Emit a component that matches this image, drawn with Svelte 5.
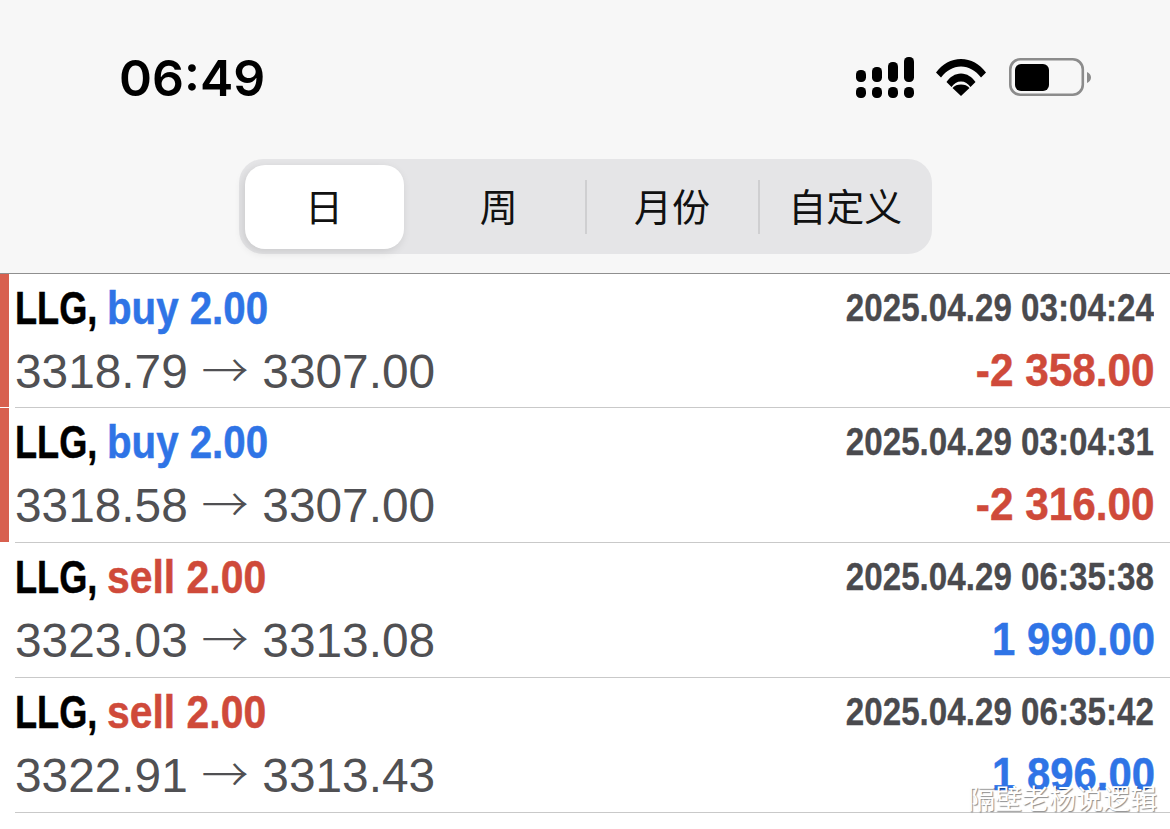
<script lang="ts">
	const TABS = ['日', '周', '月份', '自定义'];

	const TRADES = [
		{ side: 'buy', lots: '2.00', from: '3318.79', to: '3307.00', time: '2025.04.29 03:04:24', profit: '-2 358.00', loss: true },
		{ side: 'buy', lots: '2.00', from: '3318.58', to: '3307.00', time: '2025.04.29 03:04:31', profit: '-2 316.00', loss: true },
		{ side: 'sell', lots: '2.00', from: '3323.03', to: '3313.08', time: '2025.04.29 06:35:38', profit: '1 990.00', loss: false },
		{ side: 'sell', lots: '2.00', from: '3322.91', to: '3313.43', time: '2025.04.29 06:35:42', profit: '1 896.00', loss: false },
	];
</script>

<div class="screen">
	<header class="top">
		<div class="status">
			<span class="clock">06:49</span>
			<div class="status-icons">
				<svg class="signal" width="58" height="41" viewBox="0 0 58 41" fill="#000">
					<rect x="0" y="13" width="10" height="12" rx="4.500" />
					<rect x="16" y="10" width="10" height="15" rx="4.500" />
					<rect x="32" y="5" width="10" height="20" rx="4.500" />
					<rect x="48" y="0" width="10" height="25" rx="4.500" />
					<rect x="0" y="30" width="10" height="11" rx="4.500" />
					<rect x="16" y="30" width="10" height="11" rx="4.500" />
					<rect x="32" y="30" width="10" height="11" rx="4.500" />
					<rect x="48" y="30" width="10" height="11" rx="4.500" />
				</svg>
				<svg class="wifi" width="50" height="37" viewBox="0 0 50 37" fill="#000">
					<path d="M0 13.500C6.500 5 15 0 25 0s18.500 5 25 13.500l-5 5C39.500 11.500 33 7.500 25 7.500S10.500 11.500 5 18.500z" />
					<path d="M10.500 23C14 18 19 14.500 25 14.500S36 18 39.500 23l-5 5C32 24.500 29 22.500 25 22.500S18 24.500 15.500 28z" />
					<path d="M25 37l-8.500-8C18.500 26.500 21.500 25.500 25 25.500s6.500 1 8.500 3.500z" />
				</svg>
				<svg class="battery" width="82" height="38" viewBox="0 0 82 38">
					<rect x="1.300" y="1.300" width="72.500" height="35.400" rx="10" fill="none" stroke="#8c8c8c" stroke-width="2.600" />
					<rect x="6" y="6" width="34" height="27" rx="6" fill="#000" />
					<path d="M78 14c2.500 1 4 3 4 5.500S80.500 24 78 25z" fill="#8c8c8c" />
				</svg>
			</div>
		</div>
		<nav class="segments">
			{#each TABS as tab, i (tab)}
				<div class="segment" class:active={i === 0} class:divided={i > 1}>
					{#if i === 0}
						<span class="pill"></span>
					{/if}
					<span class="segment-label">{tab}</span>
				</div>
			{/each}
		</nav>
	</header>

	<ul class="trades">
		{#each TRADES as t (t.time)}
			<li class="trade">
				<span class="mark" class:on={t.loss}></span>
				<div class="trade-body">
					<div class="line">
						<span class="headline">
							<span class="symbol">LLG,</span>
							<span class="order" class:sell={t.side === 'sell'}>{t.side} {t.lots}</span>
						</span>
						<span class="time">{t.time}</span>
					</div>
					<div class="line">
						<span class="prices">{t.from} <span class="arrow">→</span> {t.to}</span>
						<span class="profit" class:loss={t.loss}>{t.profit}</span>
					</div>
				</div>
			</li>
		{/each}
	</ul>

	<span class="watermark">隔壁老杨说逻辑</span>
</div>

<style>
	:global(body) {
		background: #fff;
	}

	.screen {
		position: relative;
		height: 829px;
		overflow: hidden;
		font-family: 'Liberation Sans', Arial, sans-serif;
	}

	.top {
		height: 273px;
		background: #f7f7f7;
	}

	.status {
		display: flex;
		align-items: flex-start;
		justify-content: space-between;
		height: 159px;
		box-sizing: border-box;
		padding: 48px 79px 0 119px;
	}
	.clock {
		font-family: Inter, 'Liberation Sans', sans-serif;
		font-size: 50px;
		font-weight: 600;
		line-height: 60px;
		color: #000;
	}
	.status-icons {
		display: flex;
		align-items: flex-start;
		padding-top: 9px;
	}
	.wifi {
		margin: 2px 23px 0 22px;
	}
	.battery {
		margin-top: 1px;
	}

	.segments {
		display: grid;
		grid-template-columns: repeat(4, 1fr);
		width: 693px;
		height: 95px;
		margin-left: 239px;
		background: #e5e5e7;
		border-radius: 24px;
	}
	.segment {
		position: relative;
		display: flex;
		align-items: center;
		justify-content: center;
		padding-bottom: 3px;
	}
	.segment.active {
		padding-right: 3px;
	}
	.segment.divided::before {
		content: '';
		position: absolute;
		left: -1px;
		top: 21px;
		height: 54px;
		width: 2px;
		background: #cfcfd1;
	}
	.pill {
		position: absolute;
		left: 6px;
		top: 6px;
		right: 8px;
		bottom: 5px;
		background: #fff;
		border-radius: 20px;
		box-shadow: -2px 3px 10px rgba(0, 0, 0, 0.12);
	}
	.segment-label {
		position: relative;
		font-family: 'Noto Sans CJK SC', 'Liberation Sans', sans-serif;
		font-size: 38px;
		line-height: 1;
		color: #111;
	}

	.trades {
		list-style: none;
		margin: 0;
		padding: 0;
		border-top: 1px solid #8f8f8f;
	}
	.trade {
		display: flex;
		height: 135px;
	}
	.trade:first-child {
		height: 134px;
	}
	.mark {
		width: 9px;
		flex: none;
		margin-bottom: 1px;
	}
	.mark.on {
		background: #d8604f;
	}
	.trade-body {
		flex: 1;
		margin-left: 6px;
		padding-right: 16px;
		border-bottom: 1px solid #c9c9c9;
	}
	.line {
		display: flex;
		align-items: center;
		justify-content: space-between;
		height: 67px;
		box-sizing: border-box;
	}
	.line + .line {
		padding-bottom: 10px;
	}

	.headline {
		font-size: 47px;
		font-weight: 700;
		line-height: 1;
		white-space: nowrap;
		-webkit-text-stroke: 0.5px currentColor;
	}
	.symbol,
	.order {
		display: inline-block;
		transform-origin: left center;
	}
	.symbol {
		color: #000;
		transform: scaleX(0.77);
		margin-right: -28px;
	}
	.order {
		color: #2f74e6;
		transform: scaleX(0.856);
	}
	.order.sell {
		color: #cf4a3a;
		transform: scaleX(0.87);
	}

	.time {
		font-size: 38px;
		font-weight: 700;
		line-height: 1;
		color: #4a4a4e;
		white-space: nowrap;
		transform: scaleX(0.873);
		transform-origin: right center;
		-webkit-text-stroke: 0.3px currentColor;
	}

	.prices {
		font-size: 47.800px;
		line-height: 1;
		color: #505053;
		white-space: nowrap;
		word-spacing: 0.5px;
	}
	.arrow {
		font-family: 'Noto Sans CJK SC', sans-serif;
		font-weight: 300;
		font-size: 47px;
		line-height: 1;
	}

	.profit {
		font-size: 47px;
		font-weight: 700;
		line-height: 1;
		color: #2f74e6;
		white-space: nowrap;
		margin-right: -1px;
		transform: scaleX(0.89);
		transform-origin: right center;
		-webkit-text-stroke: 0.5px currentColor;
	}
	.profit.loss {
		color: #cf4a3a;
		transform: scaleX(0.9);
	}

	.watermark {
		position: absolute;
		right: 13px;
		top: 782px;
		font-family: 'Noto Sans CJK SC', sans-serif;
		font-size: 27px;
		line-height: 32px;
		color: #fff;
		text-shadow: 1px 1px 1px rgba(0, 0, 0, 0.45);
	}
</style>
